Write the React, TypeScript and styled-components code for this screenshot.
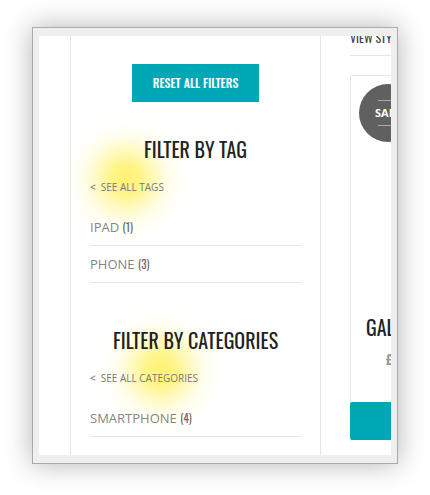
import React from "react";
import styled, { createGlobalStyle } from "styled-components";

const condensed = `Oswald, "Liberation Sans Narrow", "Roboto Condensed", sans-serif`;
const teal = "#00a8b5";
const line = "#e6e6e6";

const GlobalStyle = createGlobalStyle`
  *, *::before, *::after { box-sizing: border-box; }
  body { margin: 0; background: #fff; font-family: "Open Sans", sans-serif; color: #777; }
  button { font: inherit; border: 0; cursor: pointer; }
  a { color: inherit; text-decoration: none; }
`;

const Page = styled.div`
  padding: 27px 32px 31px;
  overflow: hidden;
`;

const Frame = styled.div`
  padding: 8px 6px;
  border: 1px solid #aaa;
  background: #efefef;
  box-shadow: 0 0 26px rgba(0, 0, 0, 0.3);
`;

const Shop = styled.main`
  display: grid;
  grid-template-columns: 251px minmax(0, 1fr);
  gap: 29px;
  padding-left: 31px;
  background: #fff;
  overflow: hidden;
`;

const Sidebar = styled.aside`
  display: flex;
  flex-direction: column;
  padding: 28px 19px 18px;
  border: solid ${line};
  border-width: 0 1px;
`;

const ResetButton = styled.button`
  align-self: center;
  padding: 0 21px;
  background: ${teal};
  color: #fff;
  font-family: ${condensed};
  font-size: 12px;
  font-weight: 500;
  line-height: 38px;
`;

const FilterSection = styled.section`
  margin-top: 32px;

  & + & {
    margin-top: 42px;
  }
`;

const SectionTitle = styled.h2`
  position: relative;
  z-index: 1;
  margin: 0;
  color: #222;
  font-family: ${condensed};
  font-size: 20px;
  font-weight: 400;
  line-height: 30px;
  text-align: center;
  white-space: nowrap;
`;

const SeeAll = styled.a`
  position: relative;
  display: inline-flex;
  gap: 5px;
  margin-top: 14px;
  color: #777;
  font-size: 10px;
  font-weight: 400;
  line-height: 18px;
`;

const Glow = styled.span<{ $center: number }>`
  position: absolute;
  top: 50%;
  left: ${({ $center }) => $center}px;
  width: 136px;
  height: 136px;
  margin: -76px 0 0 -68px;
  background: radial-gradient(
    circle closest-side,
    rgba(255, 240, 90, 0.85) 0%,
    rgba(255, 241, 100, 0.76) 22%,
    rgba(255, 243, 120, 0.48) 42%,
    rgba(255, 246, 150, 0.2) 62%,
    rgba(255, 250, 190, 0.08) 80%,
    rgba(255, 255, 220, 0) 100%
  );
  pointer-events: none;
`;

const Chevron = styled.span`
  position: relative;
  font-weight: 600;
`;

const LinkText = styled.span`
  position: relative;
`;

const FilterList = styled.ul`
  position: relative;
  margin: 13px 0 0;
  padding: 0;
  list-style: none;
`;

const FilterItem = styled.li`
  border-bottom: 1px solid ${line};
  color: #858585;
  font-size: 13px;
  font-weight: 400;
  line-height: 36px;
`;

const Count = styled.span`
  color: #666;
  font-family: ${condensed};
  font-size: 11px;
  font-weight: 400;
`;

const Products = styled.section`
  display: flex;
  flex-direction: column;
`;

const ViewBar = styled.div`
  height: 20px;
  border-bottom: 1px solid ${line};
  color: #444;
  font-family: ${condensed};
  font-size: 12px;
  line-height: 4px;
  white-space: nowrap;
`;

const ProductCard = styled.article`
  display: flex;
  flex-direction: column;
  width: 221px;
  margin-top: 19px;
`;

const ProductBody = styled.div`
  padding: 8px;
  border: solid ${line};
  border-width: 1px 1px 0;
  border-radius: 2px 2px 0 0;
`;

const SaleBadge = styled.div`
  display: flex;
  flex-direction: column;
  align-items: center;
  justify-content: center;
  gap: 4px;
  width: 58px;
  height: 58px;
  border-radius: 50%;
  background: #606060;
  color: #fff;
  font-family: "Open Sans", sans-serif;
  font-size: 11px;
  font-weight: 700;
  line-height: 16px;

  &::before,
  &::after {
    content: "";
    width: 20px;
    height: 1px;
    background: #aaa;
  }
`;

const ProductName = styled.h3`
  margin: 170px 0 0;
  padding-left: 7px;
  color: #222;
  font-family: ${condensed};
  font-size: 20px;
  font-weight: 400;
  line-height: 30px;
  white-space: nowrap;
`;

const OldPrice = styled.del`
  display: block;
  padding: 5px 0 23px 27px;
  color: #999;
  font-family: ${condensed};
  font-size: 14px;
  font-weight: 600;
  line-height: 24px;
`;

const CartButton = styled.button`
  height: 38px;
  border-radius: 2px;
  background: ${teal};
`;

type Filter = { name: string; count: number };

const tags: Filter[] = [
  { name: "IPAD", count: 1 },
  { name: "PHONE", count: 3 },
];
const categories: Filter[] = [{ name: "SMARTPHONE", count: 4 }];

function FilterGroup({ title, all, glow, items }: { title: string; all: string; glow: number; items: Filter[] }) {
  return (
    <FilterSection>
      <SectionTitle>{title}</SectionTitle>
      <SeeAll href="#">
        <Glow $center={glow} />
        <Chevron>&lt;</Chevron>
        <LinkText>{all}</LinkText>
      </SeeAll>
      <FilterList>
        {items.map(({ name, count }) => (
          <FilterItem key={name}>
            <a href="#">{name}</a> <Count>({count})</Count>
          </FilterItem>
        ))}
      </FilterList>
    </FilterSection>
  );
}

export default function App() {
  return (
    <Page>
      <GlobalStyle />
      <Frame>
        <Shop>
          <Sidebar>
            <ResetButton type="button">RESET ALL FILTERS</ResetButton>
            <FilterGroup title="FILTER BY TAG" all="SEE ALL TAGS" glow={36} items={tags} />
            <FilterGroup title="FILTER BY CATEGORIES" all="SEE ALL CATEGORIES" glow={71} items={categories} />
          </Sidebar>
          <Products>
            <ViewBar>VIEW STYLE</ViewBar>
            <ProductCard>
              <ProductBody>
                <SaleBadge>SALE</SaleBadge>
                <ProductName>GALAXY</ProductName>
                <OldPrice>£</OldPrice>
              </ProductBody>
              <CartButton type="button" aria-label="Add to cart" />
            </ProductCard>
          </Products>
        </Shop>
      </Frame>
    </Page>
  );
}
